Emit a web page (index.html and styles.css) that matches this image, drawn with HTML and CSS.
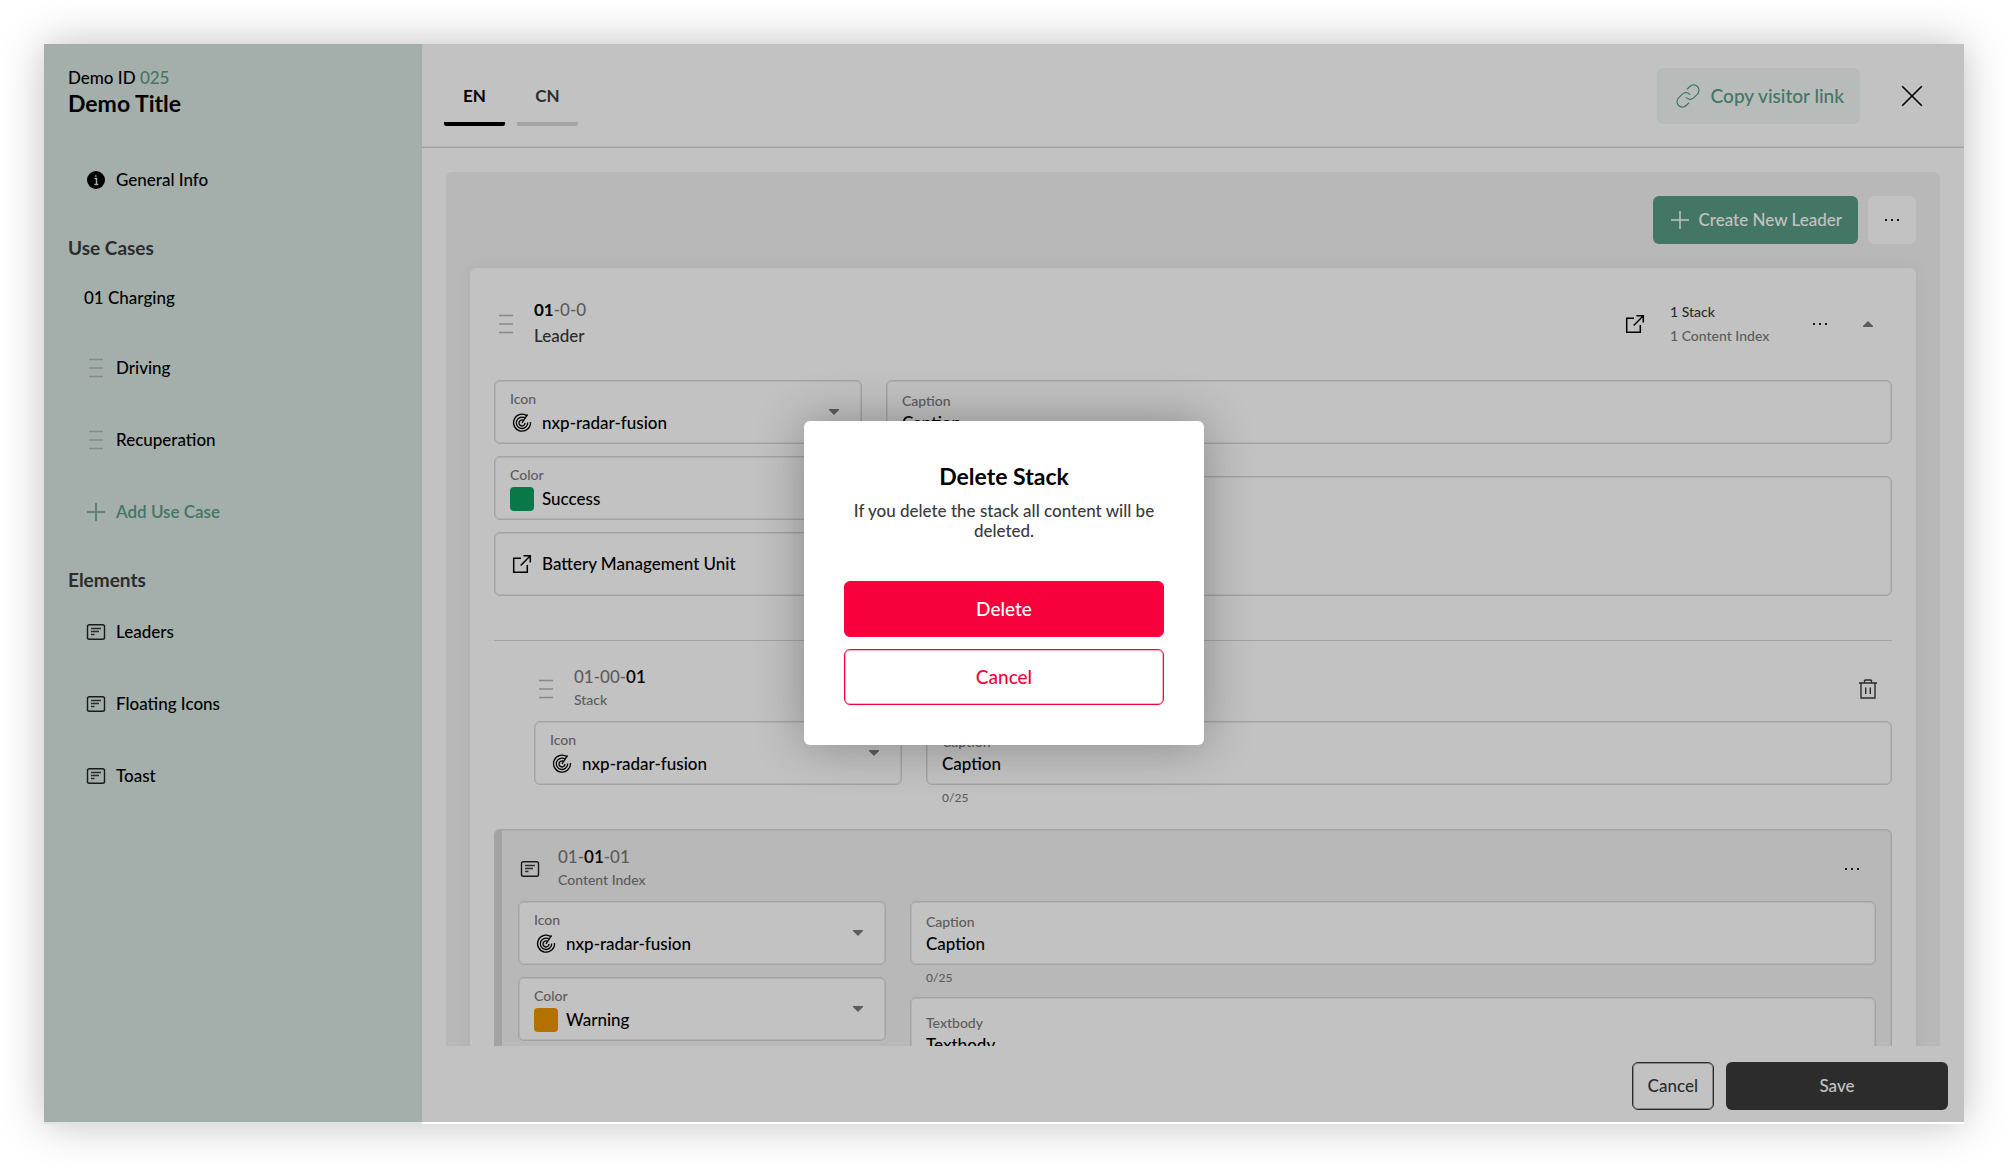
FILE: index.html
```html
<!DOCTYPE html>
<html lang="en">
<head>
<meta charset="utf-8">
<title>Demo Title</title>
<link rel="stylesheet" href="styles.css">
</head>
<body>
<svg class="sprite" aria-hidden="true">
  <symbol id="drag" viewBox="0 0 24 24"><path d="M5 3.500h14M5 12h14M5 20.500h14" stroke="#b5b5b5" stroke-width="1.500" fill="none"/></symbol>
  <symbol id="info" viewBox="0 0 24 24"><circle cx="12" cy="12" r="9"/><path d="M10.500 10.500h2v6M10.300 16.500h4M11.800 7.200v1.600" stroke="#d8e7e3" stroke-width="1.400" fill="none"/></symbol>
  <symbol id="note" viewBox="0 0 24 24"><rect x="3.500" y="4.700" width="17" height="14.600" rx="1.800" fill="none" stroke="#222" stroke-width="1.400"/><path d="M7 8.500h10M7 11.500h8M7 14.500h3.500" stroke="#3b3b3b" stroke-width="1.600" fill="none"/></symbol>
  <symbol id="plus" viewBox="0 0 24 24"><path d="M12 3v18M3 12h18" stroke="currentColor" stroke-width="1.500" fill="none"/></symbol>
  <symbol id="chain" viewBox="0 0 24 24"><g fill="none" stroke="currentColor" stroke-width="1.200" stroke-linecap="round"><path d="M11.300 5l2.500-2.500a5.200 5.200 0 0 1 7.600 7.600l-3.700 3.700a5.200 5.200 0 0 1-7.400-.100"/><path d="M12.700 19l-2.500 2.500a5.200 5.200 0 0 1-7.600-7.600l3.700-3.700a5.200 5.200 0 0 1 7.400.100"/></g></symbol>
  <symbol id="close" viewBox="0 0 24 24"><path d="M2.200 2.200l19.600 19.600M21.800 2.200L2.200 21.800" stroke="#000" stroke-width="1.600" fill="none"/></symbol>
  <symbol id="dots" viewBox="0 0 24 24"><path d="M5 11h2v2h-2zM11 11h2v2h-2zM17 11h2v2h-2z" fill="#222"/></symbol>
  <symbol id="open" viewBox="0 0 24 24"><path d="M11 6.200H3.700v14h13.600V13M13.500 3.700h6.800v6.800M20.300 3.700l-9.600 9.800" stroke="#000" stroke-width="1.500" fill="none"/></symbol>
  <symbol id="up" viewBox="0 0 10 6"><path d="M5 0l5 5v1H0V5z" fill="#7a7a7a"/></symbol>
  <symbol id="down" viewBox="0 0 10 6"><path d="M0 0h10v1L5 6 0 1z" fill="#7a7a7a"/></symbol>
  <symbol id="trash" viewBox="0 0 24 24"><path d="M3 6h18M5 6v15h14V6M8.500 6V3.500L9.500 3h5l1 .500V6M9.700 10.500v6.500M14.300 10.500v6.500" stroke="#3b3b3b" stroke-width="1.400" fill="none"/></symbol>
  <symbol id="radar" viewBox="0 0 24 24"><g stroke="#000" stroke-width="1.300" fill="none"><path d="M17.500 3.300L12 12"/><path d="M17.300 5A8.500 8.500 0 1 0 20.500 11"/><path d="M15.400 7.200A5.700 5.700 0 1 0 17.700 11.500"/><path d="M13.700 9.500A3 3 0 1 0 15 12"/></g></symbol>
</svg>

<div class="app">
  <aside class="sidebar">
    <p class="demo-id">Demo ID <span class="demo-no">025</span></p>
    <h1 class="demo-title">Demo Title</h1>
    <nav class="nav">
      <a class="nav-item" href="#general"><svg class="icon"><use href="#info"/></svg>General Info</a>
      <h2 class="nav-heading">Use Cases</h2>
      <a class="nav-item nav-current" href="#charging">01 Charging</a>
      <a class="nav-item" href="#driving"><svg class="icon"><use href="#drag"/></svg>Driving</a>
      <a class="nav-item" href="#recuperation"><svg class="icon"><use href="#drag"/></svg>Recuperation</a>
      <button class="nav-item nav-add" type="button"><svg class="icon"><use href="#plus"/></svg>Add Use Case</button>
      <h2 class="nav-heading">Elements</h2>
      <a class="nav-item" href="#leaders"><svg class="icon"><use href="#note"/></svg>Leaders</a>
      <a class="nav-item" href="#floating"><svg class="icon"><use href="#note"/></svg>Floating Icons</a>
      <a class="nav-item" href="#toast"><svg class="icon"><use href="#note"/></svg>Toast</a>
    </nav>
  </aside>

  <main class="main">
    <header class="topbar">
      <div class="tabs">
        <button class="tab tab-active" type="button">EN</button>
        <button class="tab" type="button">CN</button>
      </div>
      <button class="copy-link" type="button"><svg class="icon"><use href="#chain"/></svg>Copy visitor link</button>
      <button class="close" type="button" aria-label="Close"><svg class="icon"><use href="#close"/></svg></button>
    </header>

    <div class="scroll">
      <section class="panel">
        <div class="toolbar">
          <button class="create" type="button"><svg class="icon"><use href="#plus"/></svg>Create New Leader</button>
          <button class="more" type="button" aria-label="More"><svg class="icon"><use href="#dots"/></svg></button>
        </div>

        <article class="card">
          <header class="row-head leader-head">
            <svg class="icon"><use href="#drag"/></svg>
            <div class="ids ids-leader"><p class="id"><b>01</b>-0-0</p><p class="kind-main">Leader</p></div>
            <a class="icon-link" href="#open" aria-label="Open"><svg class="icon"><use href="#open"/></svg></a>
            <div class="counts"><p class="count-main">1 Stack</p><p>1 Content Index</p></div>
            <button class="icon-btn" type="button" aria-label="More"><svg class="icon"><use href="#dots"/></svg></button>
            <button class="icon-btn" type="button" aria-label="Collapse"><svg class="caret"><use href="#up"/></svg></button>
          </header>

          <div class="fields">
            <div class="col">
              <div class="field pick">
                <label class="label" for="icon1">Icon</label>
                <svg class="icon"><use href="#radar"/></svg>
                <select class="value" id="icon1"><option>nxp-radar-fusion</option></select>
                <svg class="caret"><use href="#down"/></svg>
              </div>
              <div class="field pick">
                <label class="label" for="color1">Color</label>
                <span class="swatch success"></span>
                <select class="value" id="color1"><option>Success</option></select>
                <svg class="caret"><use href="#down"/></svg>
              </div>
              <button class="field unit" type="button"><svg class="icon"><use href="#open"/></svg>Battery Management Unit</button>
            </div>
            <div class="col-text">
              <div class="field text"><label class="label" for="cap1">Caption</label><input class="value" id="cap1" value="Caption"></div>
              <p class="counter">0/25</p>
              <div class="field area"><textarea class="value" id="body1" aria-label="Textbody"></textarea></div>
            </div>
          </div>

          <section class="stack">
            <header class="row-head stack-head">
              <svg class="icon"><use href="#drag"/></svg>
              <div class="ids"><p class="id">01-00-<b>01</b></p><p class="kind">Stack</p></div>
              <button class="icon-btn" type="button" aria-label="Delete stack"><svg class="icon"><use href="#trash"/></svg></button>
            </header>
            <div class="fields">
              <div class="col">
                <div class="field pick">
                  <label class="label" for="icon2">Icon</label>
                  <svg class="icon"><use href="#radar"/></svg>
                  <select class="value" id="icon2"><option>nxp-radar-fusion</option></select>
                  <svg class="caret"><use href="#down"/></svg>
                </div>
              </div>
              <div class="col-text">
                <div class="field text"><label class="label" for="cap2">Caption</label><input class="value" id="cap2" value="Caption"></div>
                <p class="counter">0/25</p>
              </div>
            </div>
          </section>

          <section class="content-index">
            <header class="row-head index-head">
              <svg class="icon"><use href="#note"/></svg>
              <div class="ids"><p class="id">01-<b>01</b>-01</p><p class="kind">Content Index</p></div>
              <button class="icon-btn" type="button" aria-label="More"><svg class="icon"><use href="#dots"/></svg></button>
            </header>
            <div class="fields">
              <div class="col">
                <div class="field pick">
                  <label class="label" for="icon3">Icon</label>
                  <svg class="icon"><use href="#radar"/></svg>
                  <select class="value" id="icon3"><option>nxp-radar-fusion</option></select>
                  <svg class="caret"><use href="#down"/></svg>
                </div>
                <div class="field pick">
                  <label class="label" for="color3">Color</label>
                  <span class="swatch warning"></span>
                  <select class="value" id="color3"><option>Warning</option></select>
                  <svg class="caret"><use href="#down"/></svg>
                </div>
              </div>
              <div class="col-text">
                <div class="field text"><label class="label" for="cap3">Caption</label><input class="value" id="cap3" value="Caption"></div>
                <p class="counter">0/25</p>
                <div class="field area"><label class="label" for="body3">Textbody</label><textarea class="value" id="body3">Textbody</textarea></div>
              </div>
            </div>
          </section>
        </article>
      </section>
    </div>

    <footer class="actions">
      <button class="cancel" type="button">Cancel</button>
      <button class="save" type="button">Save</button>
    </footer>
  </main>

  <div class="overlay">
    <div class="dialog" role="dialog" aria-labelledby="dialog-title">
      <h2 class="dialog-title" id="dialog-title">Delete Stack</h2>
      <p class="dialog-text">If you delete the stack all content will be deleted.</p>
      <button class="dialog-btn danger" type="button">Delete</button>
      <button class="dialog-btn outline" type="button">Cancel</button>
    </div>
  </div>
</div>
</body>
</html>
```
FILE: styles.css
```css
* { box-sizing: border-box; margin: 0; }

:root {
  --green: #589b84;
  --line: #d6d6d6;
  --soft: #ececec;
  --ink: #3b3b3b;
  --muted: #7a7a7a;
  --red: #f8003c;
}

body {
  padding: 44px;
  background: #fff;
  color: #000;
  font: 500 17px/24px Lato, "Noto Sans", sans-serif;
}

button, input, select, textarea {
  padding: 0;
  border: 0;
  background: none;
  color: inherit;
  font: inherit;
  appearance: none;
  outline: 0;
}

a { color: inherit; text-decoration: none; }

.sprite { display: none; }
.icon { flex: none; width: 24px; height: 24px; }
.caret { flex: none; width: 10px; height: 6px; }

.app {
  position: relative;
  display: grid;
  grid-template-columns: 378px minmax(0, 1fr);
  height: calc(100vh - 88px);
  box-shadow: 0 0 40px rgba(0, 0, 0, .25);
}

/* Sidebar */
.sidebar { padding: 22px 24px; background: #d8e7e3; }
.demo-id { line-height: 24px; }
.demo-no { color: var(--green); }
.demo-title { font-size: 23px; font-weight: 700; line-height: 26px; }
.nav { display: flex; flex-direction: column; padding-top: 28px; }
.nav-item { display: flex; align-items: center; gap: 8px; height: 72px; padding-left: 16px; }
.nav-current { height: 68px; }
.nav-add { color: var(--green); font-weight: 600; }
.nav-heading { height: 48px; padding-top: 16px; color: var(--ink); font-size: 19px; font-weight: 700; line-height: 32px; }

/* Main */
.main { display: flex; flex-direction: column; min-width: 0; min-height: 0; background: #fff; }
.topbar {
  display: flex;
  align-items: center;
  height: 104px;
  padding: 0 24px 0 22px;
  border-bottom: 1px solid var(--line);
  box-shadow: inset 0 -1px var(--soft);
}
.tabs { display: flex; flex: 1; gap: 12px; align-self: flex-end; padding-bottom: 21px; }
.tab {
  width: 61px;
  height: 56px;
  border-bottom: 4px solid var(--line);
  border-radius: 2px;
  color: var(--ink);
  font-size: 17px;
  font-weight: 700;
}
.tab-active { border-color: #000; color: #000; }
.copy-link {
  display: flex;
  align-items: center;
  gap: 11px;
  height: 56px;
  padding: 0 16px 0 19px;
  border-radius: 6px;
  background: #f1f6f5;
  color: var(--green);
  font-size: 19px;
}
.close { display: grid; place-items: center; width: 56px; height: 56px; margin-left: 24px; }

.scroll { flex: 1; min-height: 0; overflow: hidden; padding: 24px 24px 0; }
.panel { padding: 24px; border-radius: 6px; background: #f2f2f2; }
.toolbar { display: flex; justify-content: flex-end; gap: 10px; }
.create {
  display: flex;
  align-items: center;
  gap: 7px;
  height: 48px;
  padding: 0 16px 0 15px;
  border-radius: 6px;
  background: var(--green);
  color: #fff;
}
.more { display: grid; place-items: center; width: 48px; height: 48px; border-radius: 6px; background: #fff; }

.card {
  margin-top: 24px;
  padding: 24px;
  border-radius: 6px;
  background: #fff;
  box-shadow: 0 0 16px rgba(0, 0, 0, .06);
}
.row-head { display: flex; align-items: center; }
.leader-head { height: 64px; margin-bottom: 24px; }
.ids { flex: 1; margin-left: 16px; }
.id { color: var(--muted); line-height: 24px; }
.id b { color: #000; font-weight: 600; }
.ids-leader .id b { font-weight: 700; }
.kind-main { color: var(--ink); line-height: 28px; }
.kind { padding-bottom: 3px; color: var(--muted); font-size: 14px; line-height: 22px; }
.icon-link { display: grid; margin-right: 23px; }
.counts { width: 126px; color: var(--muted); font-size: 14px; }
.count-main { color: var(--ink); }
.icon-btn { display: grid; place-items: center; width: 48px; height: 48px; }

/* Fields */
.fields { display: flex; gap: 24px; }
.col { display: flex; flex: none; flex-direction: column; gap: 12px; width: 368px; }
.col-text { flex: 1; min-width: 0; }
.field {
  width: 100%;
  height: 64px;
  padding: 0 15px;
  border: 1px solid var(--line);
  border-radius: 6px;
  background: #fff;
  box-shadow: inset 0 0 0 1px var(--soft);
}
.label { color: var(--muted); font-size: 14px; line-height: 20px; }
.value { width: 100%; height: 24px; }
.pick {
  display: grid;
  grid-template: 20px 24px / 24px 1fr 10px;
  column-gap: 8px;
  align-content: start;
  padding: 8px 22px 0 15px;
}
.pick .label { grid-column: 1 / 3; }
.pick .icon, .swatch { grid-area: 2 / 1; margin-top: 2px; }
.pick .value { grid-area: 2 / 2; margin-top: 2px; }
.pick .caret { grid-area: 1 / 3 / 3 / 4; align-self: center; margin-top: 2px; }
.swatch { width: 24px; height: 24px; border-radius: 4px; }
.success { background: #0d9e5f; }
.warning { background: #eb9500; }
.unit { display: flex; align-items: center; gap: 8px; }
.text { display: flex; flex-direction: column; padding-top: 10px; }
.area { display: flex; flex-direction: column; height: 120px; padding-top: 15px; }
.area .value { flex: 1; resize: none; overflow: hidden; }
.counter { height: 32px; padding: 3px 16px 0; color: var(--muted); font-size: 12px; line-height: 20px; }

.stack { margin-top: 44px; padding: 0 0 12px 40px; border-top: 1px solid var(--line); }
.stack-head { height: 80px; padding-top: 16px; }
.content-index {
  padding: 0 15px 24px 16px;
  border: 1px solid var(--line);
  border-left-width: 8px;
  border-radius: 6px;
  background: #f2f2f2;
  box-shadow: inset 0 1px #e4e4e4, inset -1px 0 #e4e4e4;
}
.index-head { height: 71px; padding-top: 7px; }

/* Footer */
.actions { display: flex; justify-content: flex-end; gap: 12px; padding: 16px 16px 14px; }
.cancel {
  height: 48px;
  padding: 0 15px;
  border: 1px solid var(--ink);
  border-radius: 6px;
  box-shadow: inset 0 0 0 1px #b0b0b0;
  color: var(--ink);
}
.save { width: 222px; height: 48px; border-radius: 6px; background: var(--ink); color: #fff; }

/* Dialog */
.overlay {
  position: absolute;
  inset: 0 0 2px;
  display: grid;
  place-items: center;
  background: rgba(0, 0, 0, .24);
}
.dialog {
  display: flex;
  flex-direction: column;
  width: 400px;
  padding: 40px;
  border-radius: 6px;
  background: #fff;
  box-shadow: 0 0 50px rgba(0, 0, 0, .3);
  text-align: center;
}
.dialog-title { font-size: 23px; font-weight: 700; line-height: 30px; }
.dialog-text { margin: 10px 0 40px; color: var(--ink); line-height: 20px; }
.dialog-btn { height: 56px; border: 1px solid var(--red); border-radius: 6px; font-size: 19px; }
.danger { margin-bottom: 12px; background: var(--red); color: #fff; }
.outline { box-shadow: inset 0 0 0 1px #fdb3c4; color: var(--red); }
```
